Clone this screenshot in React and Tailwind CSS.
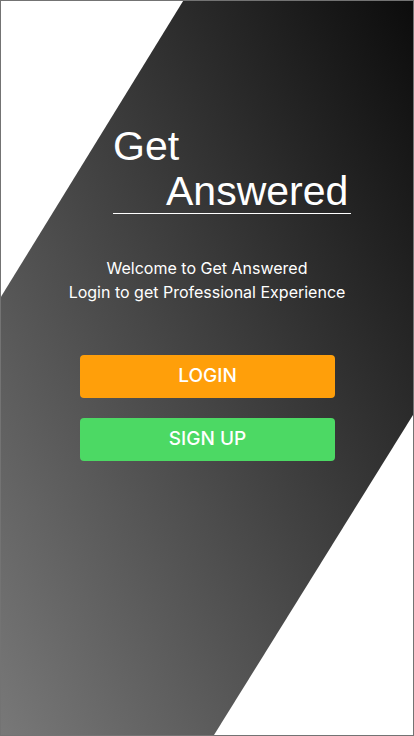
export default function App() {
  return (
    <div
      className="relative w-[414px] h-[736px] overflow-hidden bg-white border border-[#737373]"
      style={{ fontFamily: 'Inter, "Liberation Sans", Arial, sans-serif' }}
    >
      {/* diagonal dark band behind the content */}
      <div className="absolute inset-0 bg-[linear-gradient(to_bottom_left,#0c0c0c,#787878)] [clip-path:polygon(44.2%_0,100%_0,100%_56.4%,51.7%_100%,0_100%,0_40.3%)]" />

      <div className="relative flex flex-col">
        <div
          className="ml-[112px] mt-[123px] w-[238px] text-white text-[41px]"
          style={{ fontFamily: '"Liberation Sans", Arial, sans-serif' }}
        >
          <div className="leading-[45px]">Get</div>
          <div className="leading-[44px] pl-[53px] border-b border-white">Answered</div>
        </div>

        <div className="mt-[42px] text-center text-white text-[16px] leading-[24px]">
          <p>Welcome to Get Answered</p>
          <p>Login to get Professional Experience</p>
        </div>

        <div className="mt-[51px] ml-[79px] w-[255px] flex flex-col gap-[20px]">
          <button className="h-[43px] rounded-[4px] bg-[#ff9f0a] text-white text-[19px] font-medium">
            LOGIN
          </button>
          <button className="h-[43px] rounded-[4px] bg-[#4cd964] text-white text-[19px] font-medium">
            SIGN UP
          </button>
        </div>
      </div>
    </div>
  );
}
